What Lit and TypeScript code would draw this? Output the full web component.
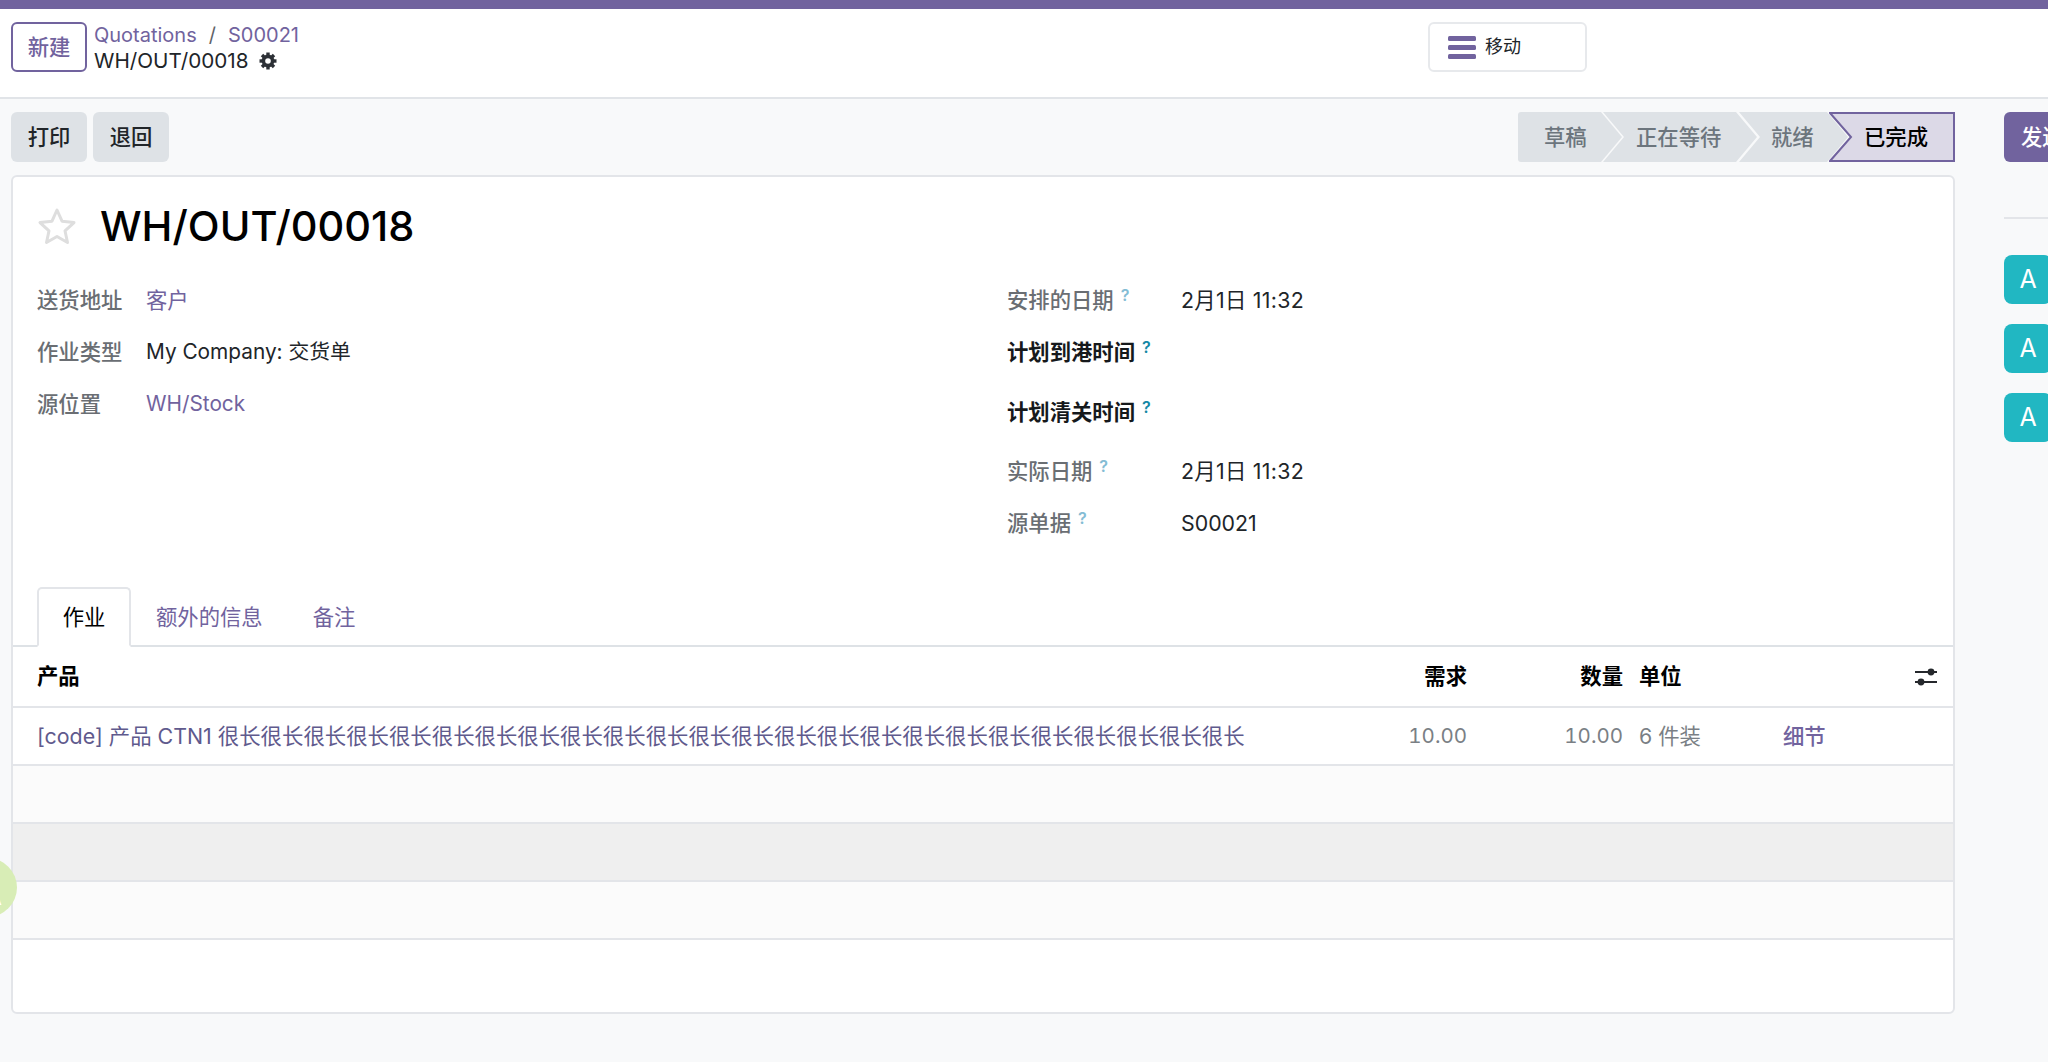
import { LitElement, html, css } from "lit";
import { customElement } from "lit/decorators.js";

@customElement("app-root")
export class AppRoot extends LitElement {
  static styles = css`
    :host {
      display: block;
      position: relative;
      width: 2048px;
      height: 1062px;
      overflow: hidden;
      background: #f8f9fa;
      color: #212529;
      font-family: Inter, "Noto Sans CJK SC", sans-serif;
      font-size: 21.33px;
      line-height: 1.25;
    }
    a { color: #71639e; text-decoration: none; }
    .topbar { height: 9px; background: #71639e; }
    .panel {
      height: 90px;
      background: #fff;
      border-bottom: 2px solid #e1e4e8;
      display: flex;
      align-items: flex-start;
      padding: 13px 0 0 11px;
      box-sizing: border-box;
    }
    .left { width: 1417px; display: flex; gap: 7px; flex: none; }
    .btn {
      width: 76px;
      height: 50px;
      display: flex;
      align-items: center;
      justify-content: center;
      box-sizing: border-box;
      border-radius: 6px;
      font-weight: 500;
      flex: none;
    }
    .btn.new { background: #fff; border: 2px solid #71639e; color: #71639e; }
    .btn.grey { background: #dee2e6; color: #212529; }
    .crumbs { display: flex; flex-direction: column; }
    .crumb-line { height: 26px; display: flex; align-items: center; white-space: pre; font-size: 20px; }
    .crumb-sep { color: #5f6368; margin: 0 12px; }
    .crumb-cur { display: flex; align-items: center; gap: 10px; font-size: 20.7px; }
    .move {
      width: 159px;
      height: 50px;
      box-sizing: border-box;
      border: 2px solid #e7e9ec;
      border-radius: 6px;
      background: #fff;
      display: flex;
      align-items: center;
      padding-left: 18px;
      gap: 9px;
      font-size: 18px;
    }
    .body { display: flex; align-items: flex-start; }
    .main { margin-left: 11px; width: 1944px; flex: none; }
    .actions {
      height: 50px;
      margin-top: 13px;
      display: flex;
      align-items: center;
      gap: 6px;
    }
    .status {
      margin-left: auto;
      display: flex;
      height: 50px;
      font-weight: 500;
    }
    .seg {
      position: relative;
      height: 50px;
      display: flex;
      align-items: center;
      background: #dee2e6;
      color: #6c757d;
      box-sizing: border-box;
      clip-path: polygon(0 0, calc(100% - 21px) 0, 100% 50%, calc(100% - 21px) 100%, 0 100%, 21px 50%);
    }
    .seg.first {
      width: 104px;
      padding-left: 26px;
      clip-path: polygon(0 0, calc(100% - 21px) 0, 100% 50%, calc(100% - 21px) 100%, 0 100%);
      border-radius: 3px 0 0 3px;
    }
    .seg.s2 { width: 154px; margin-left: -19px; padding-left: 33px; }
    .seg.s3 { width: 109px; margin-left: -18px; padding-left: 32px; }
    .seg.active {
      width: 126px;
      margin-left: -19px;
      padding-left: 35px;
      background: transparent;
      color: #000;
      clip-path: none;
    }
    .seg.active svg { position: absolute; inset: 0; width: 100%; height: 100%; }
    .seg.active span { position: relative; }
    .card {
      margin-top: 13px;
      height: 839px;
      box-sizing: border-box;
      background: #fff;
      border: 2px solid #e3e5e9;
      border-radius: 6px;
      display: flex;
      flex-direction: column;
    }
    .title-row {
      height: 97px;
      padding: 0 0 0 24px;
      display: flex;
      align-items: center;
      gap: 23px;
      flex: none;
    }
    .title { font-size: 41.5px; line-height: 1; color: #000; font-weight: 500; margin-top: 2px; }
    .fields {
      display: grid;
      grid-template-columns: 970px 1fr;
      height: 313px;
      padding: 0 0 0 24px;
      flex: none;
    }
    .field { display: flex; align-items: center; height: 52px; }
    .field.h3 { height: 68px; }
    .field.h4 { height: 50px; }
    .field.h5 { height: 54px; }
    .value { font-size: 20.8px; }
    .date { letter-spacing: 0.3px; }
    .label { color: #6a6e73; font-weight: 500; white-space: nowrap; }
    .l-left .label { width: 109px; }
    .l-right .label { width: 174px; flex: none; }
    .label.strong { color: #16191c; font-weight: 600; }
    .label sup {
      font-size: 16px;
      line-height: 1;
      color: #84bcd4;
      font-weight: 600;
      margin-left: 7px;
      vertical-align: 7px;
    }
    .label.strong sup { color: #1487a5; }
    .tabs {
      display: flex;
      height: 60px;
      padding-left: 24px;
      border-bottom: 2px solid #dee2e6;
      box-sizing: border-box;
      flex: none;
    }
    .tab {
      height: 60px;
      display: flex;
      align-items: center;
      padding: 0 25px;
      box-sizing: border-box;
      color: #71639e;
      border: 2px solid transparent;
    }
    .tab.on {
      width: 94px;
      padding: 0;
      justify-content: center;
      color: #000;
      background: #fff;
      border-color: #e3e5e9 #e3e5e9 #fff;
      border-radius: 5px 5px 0 0;
    }
    .tab.second { padding-left: 23px; padding-right: 21px; }
    .row {
      display: grid;
      grid-template-columns: 1270px 160px 156px 160px 132px 22px;
      padding-left: 24px;
      align-items: center;
      height: 58px;
      box-sizing: border-box;
      border-bottom: 2px solid #e3e5e9;
      flex: none;
    }
    .row.head { height: 61px; font-weight: 600; color: #000; }
    .row.even { background: #fbfbfb; }
    .row.hover { background: #efefef; }
    .num { text-align: right; color: #7a7f85; font-size: 20.5px; font-variant-numeric: tabular-nums; }
    .head .num { color: #000; font-size: inherit; }
    .uom { padding-left: 16px; color: #7a7f85; }
    .head .uom { color: #000; }
    .detail { color: #71639e; font-weight: 500; }
    .product { color: #5f5a8d; white-space: nowrap; font-size: 21.4px; }
    .side { margin-left: 49px; width: 83px; flex: none; display: flex; flex-direction: column; }
    .send {
      margin-top: 13px;
      height: 50px;
      width: 83px;
      box-sizing: border-box;
      padding-left: 17px;
      background: #71639e;
      color: #fff;
      font-weight: 500;
      border-radius: 6px;
      display: flex;
      align-items: center;
      white-space: nowrap;
    }
    .rule { margin-top: 55px; height: 2px; background: #e3e5e9; }
    .avatars { margin-top: 36px; display: flex; flex-direction: column; gap: 20px; }
    .avatar {
      width: 48px;
      height: 49px;
      background: #21b7c2;
      color: #fff;
      border-radius: 8px;
      display: flex;
      align-items: center;
      justify-content: center;
      font-size: 25px;
    }
    .blob {
      position: absolute;
      left: -42px;
      top: 858px;
      width: 59px;
      height: 59px;
      border-radius: 50%;
      background: #d8edb6;
      color: #fff;
      display: flex;
      align-items: center;
      justify-content: center;
      font-size: 28px;
      padding: 16px 0 0 10px;
      box-sizing: border-box;
    }
  `;

  render() {
    const longText = "很长".repeat(24);
    return html`
      <div class="topbar"></div>
      <div class="panel">
        <div class="left">
          <div class="btn new">新建</div>
          <div class="crumbs">
            <div class="crumb-line"><a>Quotations</a><span class="crumb-sep">/</span><a>S00021</a></div>
            <div class="crumb-line crumb-cur">
              <span>WH/OUT/00018</span>
              <svg width="18" height="18" viewBox="0 0 18 18">
                <g stroke="#2c3036" stroke-width="3.4">
                  <line x1="9" y1="0.5" x2="9" y2="17.5"></line>
                  <line x1="0.5" y1="9" x2="17.5" y2="9"></line>
                  <line x1="3" y1="3" x2="15" y2="15"></line>
                  <line x1="15" y1="3" x2="3" y2="15"></line>
                </g>
                <circle cx="9" cy="9" r="6.4" fill="#2c3036"></circle>
                <circle cx="9" cy="9" r="2.8" fill="#fff"></circle>
              </svg>
            </div>
          </div>
        </div>
        <div class="move">
          <svg width="28" height="23" viewBox="0 0 28 23">
            <rect y="0" width="28" height="5" rx="1.5" fill="#71639e"></rect>
            <rect y="9" width="28" height="5" rx="1.5" fill="#71639e"></rect>
            <rect y="18" width="28" height="5" rx="1.5" fill="#71639e"></rect>
          </svg>
          <span>移动</span>
        </div>
      </div>
      <div class="body">
        <div class="main">
          <div class="actions">
            <div class="btn grey">打印</div>
            <div class="btn grey">退回</div>
            <div class="status">
              <div class="seg first">草稿</div>
              <div class="seg s2">正在等待</div>
              <div class="seg s3">就绪</div>
              <div class="seg active">
                <svg viewBox="0 0 126 50" preserveAspectRatio="none">
                  <path d="M1 1H125V49H1L22 25Z" fill="#dcd9e7" stroke="#71639e" stroke-width="2"></path>
                </svg>
                <span>已完成</span>
              </div>
            </div>
          </div>
          <div class="card">
            <div class="title-row">
              <svg width="40" height="38" viewBox="0 0 40 38">
                <path d="M20 3L25 14.2L37 15.6L28 23.8L30.5 35.5L20 29.5L9.5 35.5L12 23.8L3 15.6L15 14.2Z" fill="none" stroke="#dedede" stroke-width="3" stroke-linejoin="round"></path>
              </svg>
              <div class="title">WH/OUT/00018</div>
            </div>
            <div class="fields">
              <div class="l-left">
                <div class="field"><span class="label">送货地址</span><a>客户</a></div>
                <div class="field"><span class="label">作业类型</span><span class="value">My Company: 交货单</span></div>
                <div class="field"><span class="label">源位置</span><a class="value">WH/Stock</a></div>
              </div>
              <div class="l-right">
                <div class="field"><span class="label">安排的日期<sup>?</sup></span><span class="date">2月1日 11:32</span></div>
                <div class="field"><span class="label strong">计划到港时间<sup>?</sup></span></div>
                <div class="field h3"><span class="label strong">计划清关时间<sup>?</sup></span></div>
                <div class="field h4"><span class="label">实际日期<sup>?</sup></span><span class="date">2月1日 11:32</span></div>
                <div class="field h5"><span class="label">源单据<sup>?</sup></span><span>S00021</span></div>
              </div>
            </div>
            <div class="tabs">
              <div class="tab on">作业</div>
              <div class="tab second">额外的信息</div>
              <div class="tab">备注</div>
            </div>
            <div class="row head">
              <span>产品</span>
              <span class="num">需求</span>
              <span class="num">数量</span>
              <span class="uom">单位</span>
              <span></span>
              <svg width="22" height="20" viewBox="0 0 22 20">
                <g fill="#25282c" stroke="#25282c">
                  <line x1="0" y1="5" x2="22" y2="5" stroke-width="2"></line>
                  <line x1="0" y1="15" x2="22" y2="15" stroke-width="2"></line>
                  <circle cx="16" cy="5" r="3.4" stroke="none"></circle>
                  <circle cx="6" cy="15" r="3.4" stroke="none"></circle>
                </g>
              </svg>
            </div>
            <div class="row">
              <a class="product">[code] 产品 CTN1 ${longText}</a>
              <span class="num">10.00</span>
              <span class="num">10.00</span>
              <span class="uom">6 件装</span>
              <span class="detail">细节</span>
              <span></span>
            </div>
            <div class="row even"></div>
            <div class="row hover"></div>
            <div class="row even"></div>
          </div>
        </div>
        <div class="side">
          <div class="send">发送消息</div>
          <div class="rule"></div>
          <div class="avatars">
            <div class="avatar">A</div>
            <div class="avatar">A</div>
            <div class="avatar">A</div>
          </div>
        </div>
      </div>
      <div class="blob">A</div>
    `;
  }
}
